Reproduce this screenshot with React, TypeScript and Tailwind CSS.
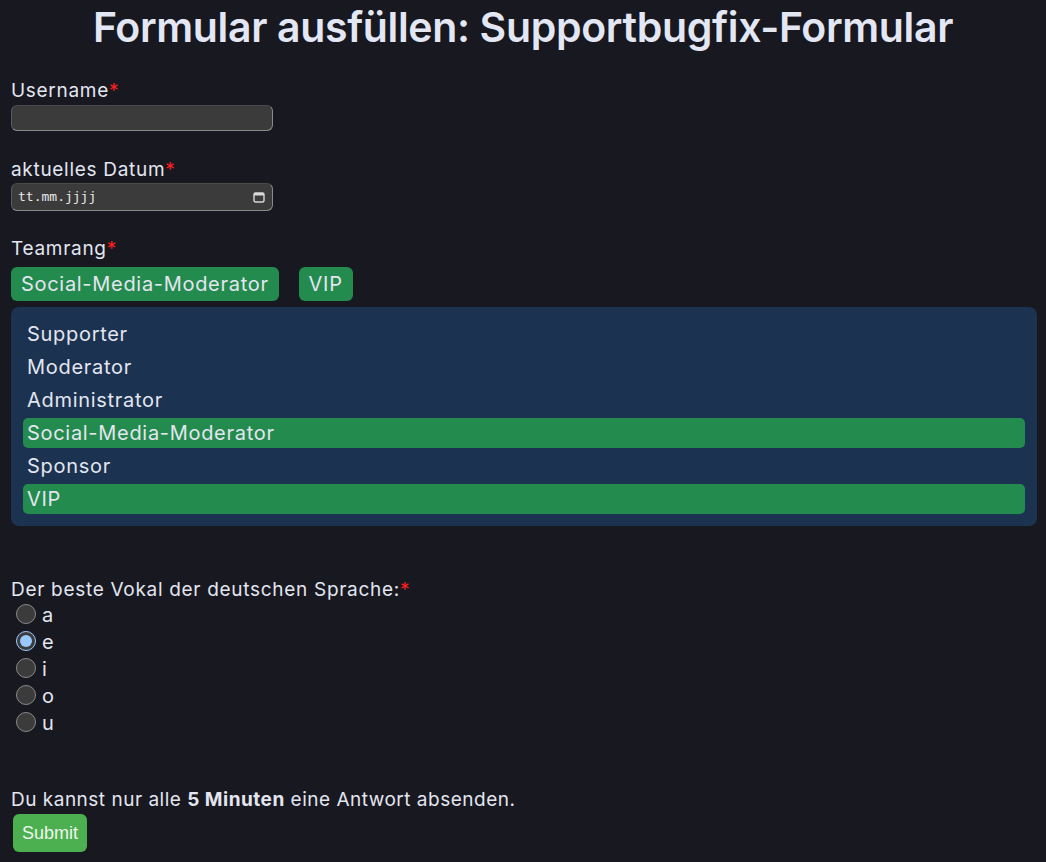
import React from "react";

const font = { fontFamily: "Inter, 'Noto Sans', sans-serif" };

function Label({ children }: { children: React.ReactNode }) {
  return (
    <div className="text-[19px] leading-[22px] tracking-[0.7px] text-[#e3e6f0]">
      {children}
      <span className="text-[#ff1f1f]">*</span>
    </div>
  );
}

export default function App() {
  const options = [
    { name: "Supporter", sel: false },
    { name: "Moderator", sel: false },
    { name: "Administrator", sel: false },
    { name: "Social-Media-Moderator", sel: true },
    { name: "Sponsor", sel: false },
    { name: "VIP", sel: true },
  ];
  const vowels = ["a", "e", "i", "o", "u"];
  return (
    <div className="min-h-[862px] bg-[#181820] px-[11px] text-[#e3e6f0]" style={font}>
      <h1 className="pt-[3px] text-center text-[41px] font-semibold leading-[48px] tracking-[-0.35px] text-[#e3e6f3]">
        Formular ausfüllen: Supportbugfix-Formular
      </h1>

      <div className="mt-[29px]">
        <Label>Username</Label>
        <div className="mt-[3px] h-[26px] w-[262px] rounded-[6px] border border-t-[#4a4a4a] border-l-[#5a5a5a] border-r-[#8a8a8a] border-b-[#8a8a8a] bg-[#3b3b3b]" />
      </div>

      <div className="mt-[28px]">
        <Label>aktuelles Datum</Label>
        <div className="mt-[2px] flex h-[28px] w-[262px] items-center justify-between rounded-[6px] border border-t-[#4a4a4a] border-l-[#5a5a5a] border-r-[#8a8a8a] border-b-[#8a8a8a] bg-[#3b3b3b] pl-[6px] pr-[7px]">
          <span className="text-[13px] text-[#e8e8e8]" style={{ fontFamily: "'DejaVu Sans Mono', monospace" }}>
            tt.mm.jjjj
          </span>
          <svg width="12" height="12" viewBox="0 0 12 12" fill="none">
            <rect x="1" y="2" width="10" height="9" rx="1.5" stroke="#d8d8d8" strokeWidth="1.4" />
            <rect x="1" y="2" width="10" height="2.5" fill="#d8d8d8" />
          </svg>
        </div>
      </div>

      <div className="mt-[27px]">
        <Label>Teamrang</Label>
        <div className="mt-[7px] flex gap-[20px]">
          <span className="flex h-[34px] items-center rounded-[6px] bg-[#238b4d] px-[10px] text-[20px] tracking-[0.7px] text-[#e3e6f0]">
            Social-Media-Moderator
          </span>
          <span className="flex h-[34px] items-center rounded-[6px] bg-[#238b4d] px-[10px] text-[20px] tracking-[0.7px] text-[#e3e6f0]">
            VIP
          </span>
        </div>
        <div className="mt-[6px] mr-[-2px] flex flex-col gap-[3px] rounded-[8px] bg-[#1b3250] p-[12px]">
          {options.map((o) => (
            <div
              key={o.name}
              className={
                "flex h-[30px] items-center rounded-[5px] px-[4px] text-[20px] tracking-[0.7px] text-[#e3e6f0] " +
                (o.sel ? "bg-[#238b4d]" : "")
              }
            >
              {o.name}
            </div>
          ))}
        </div>
      </div>

      <div className="mt-[53px]">
        <Label>Der beste Vokal der deutschen Sprache:</Label>
        <div className="flex flex-col">
          {vowels.map((v) => (
            <label key={v} className="flex h-[27px] items-start text-[20px] leading-[27px]">
              <input
                type="radio"
                name="vokal"
                defaultChecked={v === "e"}
                className="mt-[3px] ml-[5px] mr-[6px] h-[20px] w-[20px] scheme-dark"
              />
              <span className="mt-[1px]">{v}</span>
            </label>
          ))}
        </div>
      </div>

      <div className="mt-[53px] text-[19px] leading-[22px] tracking-[0.5px]">
        Du kannst nur alle <b className="font-bold">5 Minuten</b> eine Antwort absenden.
      </div>
      <button
        className="ml-[2px] mt-[3px] h-[38px] rounded-[6px] bg-[#4caf50] px-[9px] text-[18px] text-[#eef6ee]"
        style={{ fontFamily: "'Liberation Sans', Arial, sans-serif" }}
      >
        Submit
      </button>
    </div>
  );
}
